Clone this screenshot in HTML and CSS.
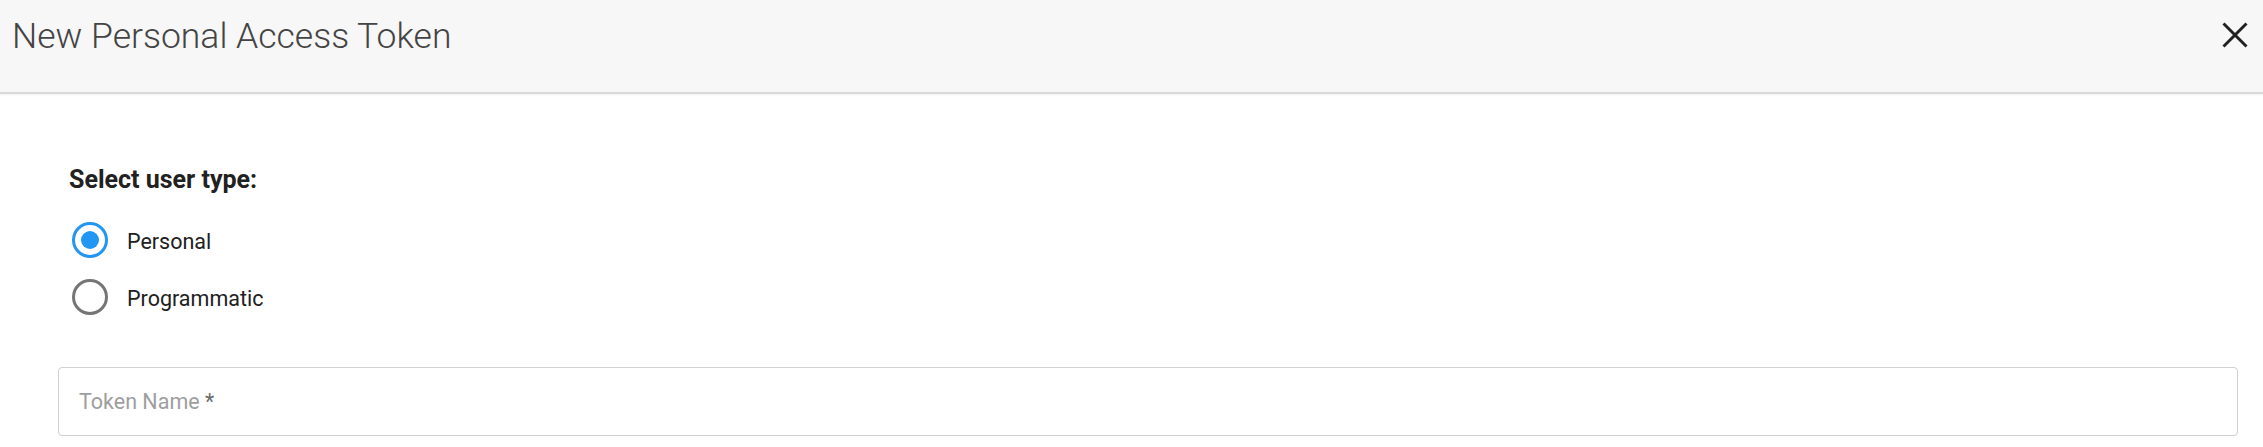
FILE: index.html
```html
<!DOCTYPE html>
<html lang="en">
<head>
<meta charset="utf-8">
<title>New Personal Access Token</title>
<link rel="stylesheet" href="styles.css">
</head>
<body>
<div class="dialog">
  <header class="dialog-header">
    <h1 class="dialog-title">New Personal Access Token</h1>
    <button class="close-btn" type="button" aria-label="Close">
      <svg viewBox="0 0 26 26" width="26" height="26" aria-hidden="true">
        <path d="M1.5 1.5 L24.5 24.5 M24.5 1.5 L1.5 24.5" stroke="#222" stroke-width="3" fill="none"/>
      </svg>
    </button>
  </header>
  <main class="dialog-body">
    <fieldset class="user-type">
      <legend class="user-type-legend">Select user type:</legend>
      <label class="radio-row">
        <span class="radio radio-checked"><span class="radio-dot"></span></span>
        <span class="radio-label">Personal</span>
      </label>
      <label class="radio-row">
        <span class="radio"></span>
        <span class="radio-label">Programmatic</span>
      </label>
    </fieldset>
    <div class="text-field">
      <span class="placeholder">Token Name <span class="required">*</span></span>
    </div>
  </main>
</div>
</body>
</html>
```

FILE: styles.css
```css
* { box-sizing: border-box; }
html, body {
  margin: 0;
  padding: 0;
  background: #ffffff;
  font-family: Roboto, "Liberation Sans", Arial, sans-serif;
}
.dialog {
  width: 100%;
}
.dialog-header {
  height: 94px;
  background: #f7f7f7;
  border-bottom: 2px solid #d9d9d9;
  box-shadow: 0 1px 2px rgba(0,0,0,0.06);
  display: flex;
  align-items: flex-start;
  justify-content: space-between;
  padding: 0 15px 0 12px;
}
.dialog-title {
  margin: 0;
  padding-top: 15px;
  font-weight: 300;
  font-size: 35.5px;
  line-height: 42px;
  color: #444444;
  letter-spacing: 0;
}
.close-btn {
  margin-top: 22px;
  padding: 0;
  border: 0;
  background: transparent;
  width: 26px;
  height: 26px;
  display: flex;
}
.dialog-body {
  padding: 72px 25px 0 58px;
}
.user-type {
  border: 0;
  margin: 0;
  padding: 0;
  display: flex;
  flex-direction: column;
  gap: 9px;
}
.user-type-legend {
  padding: 0 0 0 11px;
  font-weight: 700;
  font-size: 25px;
  line-height: 28px;
  color: #212121;
  margin-bottom: 13px;
  float: left;
  width: 100%;
}
.radio-row {
  display: flex;
  align-items: center;
  height: 48px;
  padding-left: 14px;
  gap: 19px;
}
.radio {
  width: 36px;
  height: 36px;
  border-radius: 50%;
  border: 3px solid #757575;
  display: flex;
  align-items: center;
  justify-content: center;
  flex: none;
}
.radio-checked {
  border-color: #2196f3;
}
.radio-dot {
  width: 18px;
  height: 18px;
  border-radius: 50%;
  background: #2196f3;
}
.radio-label {
  font-size: 21.5px;
  color: #212121;
  padding-top: 2px;
}
.text-field {
  margin-top: 46px;
  height: 69px;
  border: 1px solid #d0d0d0;
  border-radius: 4px;
  display: flex;
  align-items: center;
  padding-left: 20px;
}
.placeholder {
  font-size: 21.5px;
  color: #9e9e9e;
}
.required {
  color: #6b6b6b;
}
```
